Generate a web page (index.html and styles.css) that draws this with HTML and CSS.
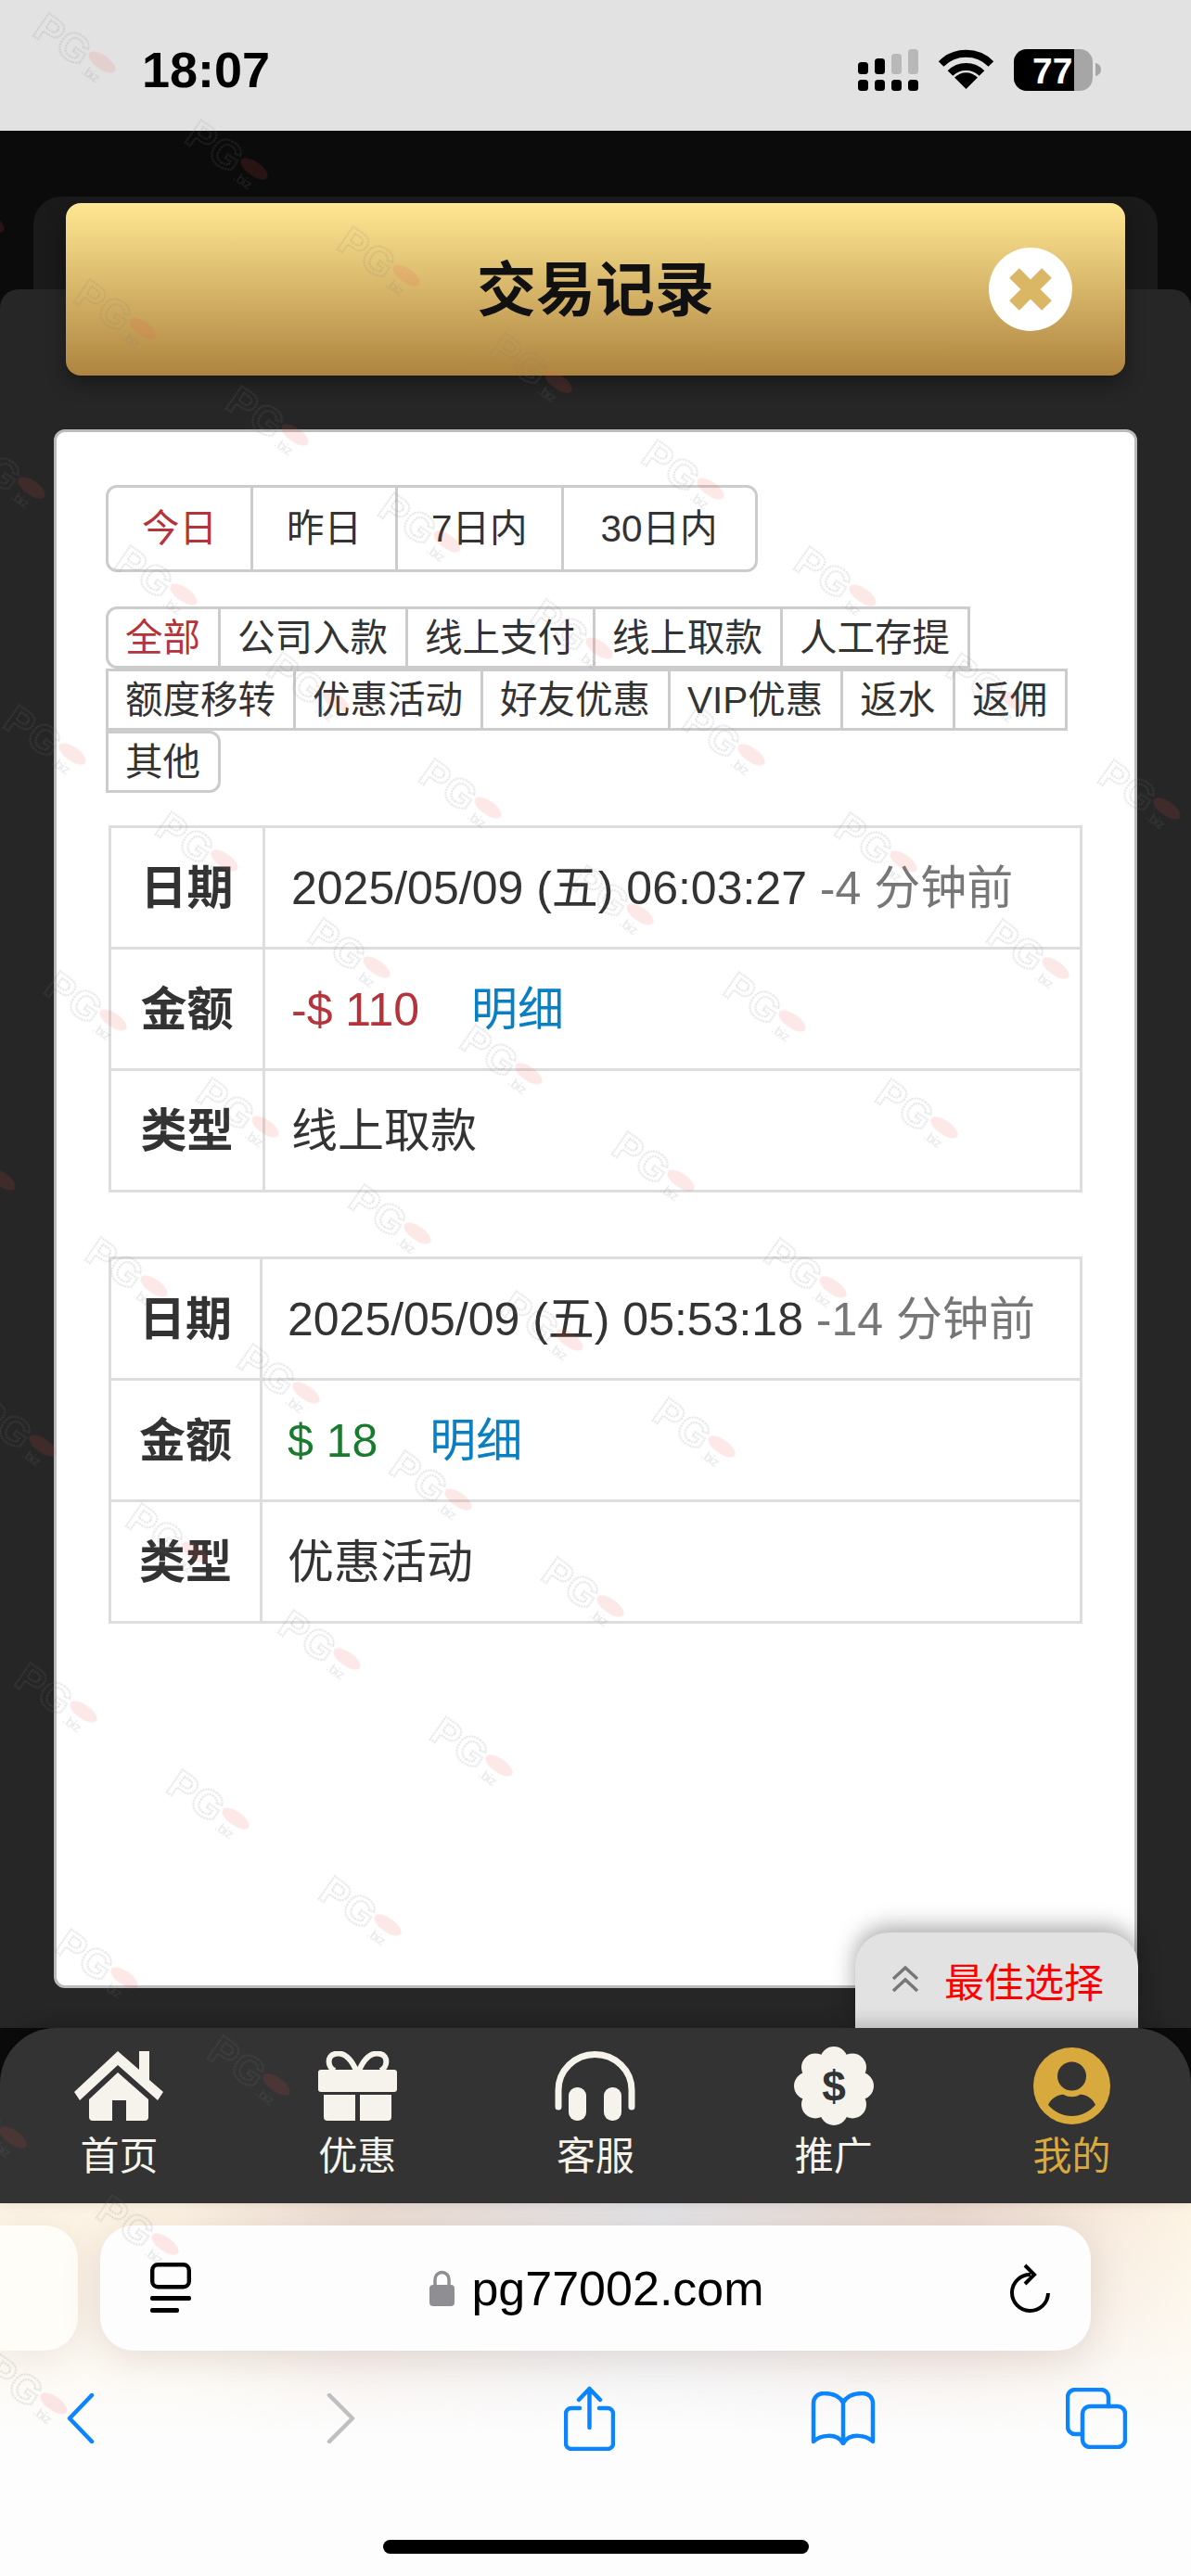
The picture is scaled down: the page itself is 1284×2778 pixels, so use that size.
FILE: index.html
```html
<!DOCTYPE html>
<html lang="zh-CN">
<head>
    <meta charset="UTF-8">
    <meta name="viewport" content="width=device-width, initial-scale=1.0">
    <title>交易记录</title>
    <link rel="stylesheet" href="styles.css">
</head>
<body>
    <!-- Status bar -->
    <header class="status-bar">
        <span class="status-time">18:07</span>
        <svg class="status-icons" width="262" height="51" viewBox="0 -3 262 51">
            <g fill="#000">
                <rect x="0" y="33" width="11" height="12" rx="3.5"/>
                <rect x="18" y="33" width="11" height="12" rx="3.5"/>
                <rect x="36" y="33" width="11" height="12" rx="3.5"/>
                <rect x="54" y="33" width="11" height="12" rx="3.5"/>
                <rect x="0" y="14" width="11" height="13" rx="3.5"/>
                <rect x="18" y="10" width="11" height="17" rx="3.5"/>
            </g>
            <g fill="#b8b8b8">
                <rect x="36" y="5" width="11" height="22" rx="3.5"/>
                <rect x="54" y="0" width="11" height="27" rx="3.5"/>
            </g>
            <g transform="translate(88 1)">
                <path d="M1.6 15A38 38 0 0 1 55.4 15M11.5 25A24 24 0 0 1 45.5 25" fill="none" stroke="#000" stroke-width="8"/>
                <path d="M28.5 42L16 29.5A17.7 17.7 0 0 1 41 29.5Z" fill="#000"/>
            </g>
            <rect x="168" y="0" width="85" height="45" rx="14" fill="#a6a6a6"/>
            <path d="M182 0H233V45H182A14 14 0 0 1 168 31V14A14 14 0 0 1 182 0Z" fill="#000"/>
            <path d="M256 15a7 7 0 0 1 6 7a7 7 0 0 1-6 7Z" fill="#a6a6a6"/>
            <text class="battery-text" x="188" y="37">77</text>
        </svg>
    </header>

    <div class="app">
        <div class="modal-back"></div>

        <!-- Title -->
        <div class="modal-title">
            <h1>交易记录</h1>
            <svg class="close-btn" width="90" height="90" viewBox="0 0 90 90">
                <circle cx="45" cy="45" r="45" fill="#fff"/>
                <path d="M27.5 27.5L62.5 62.5M62.5 27.5L27.5 62.5" stroke="#d9b765" stroke-width="15"/>
            </svg>
        </div>

        <main class="modal-body">
            <section class="card">
                <ul class="tabs">
                    <li class="active">今日</li>
                    <li>昨日</li>
                    <li>7日内</li>
                    <li>30日内</li>
                </ul>
                <ul class="filters">
                    <li class="active">全部</li>
                    <li>公司入款</li>
                    <li>线上支付</li>
                    <li>线上取款</li>
                    <li>人工存提</li>
                    <li>额度移转</li>
                    <li>优惠活动</li>
                    <li>好友优惠</li>
                    <li>VIP优惠</li>
                    <li>返水</li>
                    <li>返佣</li>
                    <li>其他</li>
                </ul>

                <!-- Records -->
                <table class="record">
                    <tr>
                        <th>日期</th>
                        <td>2025/05/09 (五) 06:03:27 <span class="ago">-4 分钟前</span></td>
                    </tr>
                    <tr>
                        <th>金额</th>
                        <td><span class="minus">-$ 110</span><a class="detail" href="#">明细</a></td>
                    </tr>
                    <tr>
                        <th>类型</th>
                        <td>线上取款</td>
                    </tr>
                </table>
                <table class="record record-narrow">
                    <tr>
                        <th>日期</th>
                        <td>2025/05/09 (五) 05:53:18 <span class="ago">-14 分钟前</span></td>
                    </tr>
                    <tr>
                        <th>金额</th>
                        <td><span class="plus">$ 18</span><a class="detail" href="#">明细</a></td>
                    </tr>
                    <tr>
                        <th>类型</th>
                        <td>优惠活动</td>
                    </tr>
                </table>
            </section>

            <div class="best-choice">
                <svg width="30" height="29" viewBox="0 0 30 29">
                    <path d="M2 14L15 2L28 14M2 27L15 15L28 27" fill="none" stroke="#777" stroke-width="3.5"/>
                </svg>
                <span>最佳选择</span>
            </div>
        </main>

        <!-- Bottom menu -->
        <nav class="bottom-nav">
            <a class="nav-item" href="#">
                <span class="nav-icon">
                    <svg width="96" height="75" viewBox="0 0 96 75" fill="#f5f3eb">
                        <path d="M47 0L70 20V0H81V31L96 44L90 53L47 15L6 53L0 44Z"/>
                        <path d="M47 23L80 52V71a4 4 0 0 1-4 4H56V53H41V75H20a4 4 0 0 1-4-4V52Z"/>
                    </svg>
                </span>
                首页
            </a>
            <a class="nav-item" href="#">
                <span class="nav-icon">
                    <svg width="85" height="75" viewBox="0 0 85 75" fill="#f5f3eb">
                        <path d="M41 21C35 7 27 1 18 3C9 5 10 18 18 21M44 21C50 7 58 1 67 3C76 5 75 18 67 21" fill="none" stroke="#f5f3eb" stroke-width="6"/>
                        <rect x="0" y="20" width="85" height="24" rx="3"/>
                        <path d="M6 47H40V75H10a4 4 0 0 1-4-4Z"/>
                        <path d="M45 47H79V71a4 4 0 0 1-4 4H45Z"/>
                    </svg>
                </span>
                优惠
            </a>
            <a class="nav-item" href="#">
                <span class="nav-icon">
                    <svg width="87" height="75" viewBox="0 0 87 75" fill="#f5f3eb">
                        <path d="M4 60V42A39.5 38.5 0 0 1 83 42V60" fill="none" stroke="#f5f3eb" stroke-width="7" stroke-linecap="round"/>
                        <rect x="15" y="39" width="19" height="36" rx="9"/>
                        <rect x="53" y="39" width="19" height="36" rx="9"/>
                    </svg>
                </span>
                客服
            </a>
            <a class="nav-item" href="#">
                <span class="nav-icon">
                    <svg width="86" height="85" viewBox="0 0 86 85" fill="#f5f3eb">
                        <circle cx="43" cy="42.5" r="30"/>
                        <circle cx="43" cy="15" r="15"/>
                        <circle cx="43" cy="70" r="15"/>
                        <circle cx="15" cy="42.5" r="15"/>
                        <circle cx="71" cy="42.5" r="15"/>
                        <circle cx="23" cy="22.5" r="15"/>
                        <circle cx="63" cy="22.5" r="15"/>
                        <circle cx="23" cy="62.5" r="15"/>
                        <circle cx="63" cy="62.5" r="15"/>
                        <text class="coin-text" x="43" y="59">$</text>
                    </svg>
                </span>
                推广
            </a>
            <a class="nav-item nav-active" href="#">
                <span class="nav-icon">
                    <svg width="83" height="83" viewBox="0 0 83 83">
                        <circle cx="41.5" cy="41.5" r="41.5" fill="#d8a93c"/>
                        <circle cx="41.5" cy="31" r="15.5" fill="#333"/>
                        <path d="M16 62C20 53 30 50 33 51C38 54 45 54 50 51C54 50 63 53 67 62C60 70 51 74 41.5 74C32 74 23 70 16 62Z" fill="#333"/>
                    </svg>
                </span>
                我的
            </a>
        </nav>
    </div>

    <!-- Safari bar -->
    <footer class="browser">
        <div class="address-row">
            <div class="tab-stub"></div>
            <div class="address-pill">
                <svg class="pill-left" width="44" height="55" viewBox="0 0 44 55">
                    <rect x="2.2" y="2.2" width="39.6" height="24" rx="6" fill="none" stroke="#000" stroke-width="4.4"/>
                    <rect x="0" y="36" width="44" height="5" rx="2"/>
                    <rect x="0" y="49" width="31" height="5" rx="2"/>
                </svg>
                <div class="url">
                    <svg width="27" height="39" viewBox="0 0 27 39">
                        <path d="M6 18V10a7.500 7.500 0 0 1 15 0V18" fill="none" stroke="#8e8e93" stroke-width="3.500"/>
                        <rect x="0" y="16" width="27" height="23" rx="4" fill="#8e8e93"/>
                    </svg>
                    <span>pg77002.com</span>
                </div>
                <svg class="pill-right" width="43" height="54" viewBox="0 0 43 54">
                    <path d="M22 12A19.500 19.500 0 1 0 41 32" fill="none" stroke="#000" stroke-width="4"/>
                    <path d="M16 2L26 12L16 22" fill="none" stroke="#000" stroke-width="4"/>
                </svg>
            </div>
        </div>
        <div class="toolbar">
            <svg width="30" height="54" viewBox="0 0 30 54">
                <path class="ios-line" d="M27 2L3 27L27 52"/>
            </svg>
            <svg width="31" height="54" viewBox="0 0 31 54">
                <path class="ios-line ios-off" d="M3 2L28 27L3 52"/>
            </svg>
            <svg width="55" height="70" viewBox="0 0 55 70">
                <path class="ios-line" d="M17 24H8a6 6 0 0 0-6 6V62a6 6 0 0 0 6 6H47a6 6 0 0 0 6-6V30a6 6 0 0 0-6-6H38M27.500 45V3M16 15L27.500 3L39 15"/>
            </svg>
            <svg width="70" height="58" viewBox="0 0 70 58">
                <path class="ios-line" d="M35 12C31 4 22 2 14 2C7 2 3 7 3 13V54C10 47 28 44 35 56C42 44 60 47 67 54V13C67 7 63 2 56 2C48 2 39 4 35 12ZM35 12V52"/>
            </svg>
            <svg width="66" height="66" viewBox="0 0 66 66">
                <rect class="ios-line" x="18" y="20" width="46" height="44" rx="8"/>
                <path class="ios-line" d="M18 50H10a8 8 0 0 1-8-8V10a8 8 0 0 1 8-8H38a8 8 0 0 1 8 8V20"/>
            </svg>
        </div>
        <div class="home-indicator"></div>
    </footer>

    <!-- Watermark over the whole screen -->
    <svg class="watermark" width="1284" height="2778">
        <defs>
            <pattern id="wm" patternUnits="userSpaceOnUse" width="1" height="1" patternTransform="matrix(164 115 -120 172 58 -94)">
                <g transform="matrix(.0040945 -.0027376 .0028566 .0039040 0 0)">
                    <g transform="translate(52 161) rotate(35)">
                        <text class="wm-logo" x="-16" y="22">PG</text>
                        <text class="wm-biz" x="-14" y="24">.biz</text>
                        <ellipse cx="0" cy="0" rx="17" ry="7.500" fill="#f05050" fill-opacity=".13"/>
                    </g>
                </g>
            </pattern>
        </defs>
        <polygon points="0,-112 1284,788 1284,889 0,2758" fill="url(#wm)"/>
    </svg>
</body>
</html>
```

FILE: styles.css
```css
/* Global */
* {
    box-sizing: border-box;
}
html, body {
    margin: 0;
    padding: 0;
}
body {
    position: relative;
    display: flex;
    flex-direction: column;
    width: 1284px;
    height: 2778px;
    overflow: hidden;
    background-color: #0b0b0b;
    color: #333;
    font-family: "Liberation Sans", "Noto Sans CJK SC", sans-serif;
}
ul {
    list-style: none;
    margin: 0;
    padding: 0;
}
a {
    text-decoration: none;
    color: inherit;
}

/* Status bar */
.status-bar {
    display: flex;
    justify-content: space-between;
    align-items: center;
    flex: 0 0 141px;
    padding: 9px 97px 0 153px;
    background-color: #e2e2e2;
}
.status-time {
    font-size: 54px;
    font-weight: bold;
    color: #000;
}
.battery-text {
    font-family: "Liberation Sans", sans-serif;
    font-size: 39px;
    font-weight: bold;
    fill: #fff;
}

/* Modal */
.app {
    position: relative;
    display: flex;
    flex-direction: column;
    flex: 1;
}
.modal-back {
    flex: 0 0 100px;
    margin: 71px 36px 0;
    border-radius: 30px 30px 0 0;
    background-color: #1a1a1a;
}
.modal-title {
    position: absolute;
    top: 78px;
    left: 71px;
    z-index: 2;
    display: flex;
    justify-content: center;
    align-items: center;
    width: 1142px;
    height: 186px;
    padding-bottom: 10px;
    border-radius: 16px;
    background: linear-gradient(to bottom, #ffe793, #ae843f);
    box-shadow: 0 9px 20px rgba(0, 0, 0, 0.35);
}
.modal-title h1 {
    margin: 0;
    font-size: 64px;
    font-weight: bold;
    color: #111;
}
.close-btn {
    position: absolute;
    top: 48px;
    right: 57px;
}
.modal-body {
    position: relative;
    display: flex;
    flex: 1;
    padding: 151px 58px 43px;
    border-radius: 20px 20px 0 0;
    background-color: #262626;
}

/* Card */
.card {
    flex: 1;
    padding: 57px 53px;
    border: 3px solid #bbb;
    border-radius: 12px;
    background-color: #fff;
}
.tabs, .filters {
    display: flex;
    font-size: 40.5px;
    color: #333;
}
.tabs {
    width: fit-content;
    height: 94px;
    border: 3px solid #ccc;
    border-radius: 12px;
}
.tabs li {
    display: flex;
    align-items: center;
    padding: 0 36px 8px;
    border-left: 3px solid #ccc;
}
.tabs li:first-child {
    border-left: 0;
}
.tabs li:last-child {
    padding: 0 40px 8px;
}
.filters {
    flex-wrap: wrap;
    margin: 37px 0 35px;
}
.filters li {
    display: flex;
    align-items: center;
    height: 67px;
    margin-right: -3px;
    padding: 0 19px 6px 18px;
    border: 3px solid #ccc;
}
.filters li:first-child {
    border-radius: 12px 0 0 12px;
}
.filters li:last-child {
    border-radius: 0 12px 12px 0;
}
.tabs .active, .filters .active {
    color: #b5333a;
}

/* Records */
.record {
    width: calc(100% - 6px);
    margin: 0 3px 69px;
    border-collapse: collapse;
    font-size: 50px;
}
.record th, .record td {
    height: 131px;
    padding-bottom: 9px;
    border: 3px solid #ddd;
}
.record th {
    width: 166px;
    font-weight: bold;
    text-align: center;
}
.record td {
    padding-left: 28px;
}
.record-narrow th {
    width: 163px;
}
.record-narrow td {
    padding-left: 27px;
}
.ago {
    color: #777;
}
.minus {
    color: #b5333a;
}
.plus {
    color: #1a7a2e;
}
.detail {
    margin-left: 56px;
    color: #0a7fc1;
}

/* Floating button */
.best-choice {
    position: absolute;
    right: 57px;
    bottom: 0;
    display: flex;
    align-items: center;
    gap: 27px;
    width: 305px;
    height: 103px;
    padding: 0 0 2px 39px;
    border-radius: 36px 36px 0 0;
    background-color: #e2e2e2;
    box-shadow: 0 -6px 24px rgba(0, 0, 0, 0.35);
    font-size: 43px;
    color: #f00;
}

/* Bottom menu */
.bottom-nav {
    position: relative;
    display: grid;
    grid-template-columns: repeat(5, 1fr);
    flex: 0 0 189px;
    border-radius: 60px 60px 0 0;
    background-color: #333;
    box-shadow: 0 -6px 18px rgba(0, 0, 0, 0.18);
}
.nav-item {
    display: flex;
    flex-direction: column;
    align-items: center;
    padding-top: 15px;
    font-size: 42px;
    line-height: 60px;
    color: #f5f3eb;
}
.nav-icon {
    display: flex;
    justify-content: center;
    align-items: center;
    height: 94px;
}
.nav-active {
    color: #d8a93c;
}
.coin-text {
    font-family: "Liberation Sans", sans-serif;
    font-size: 46px;
    font-weight: bold;
    text-anchor: middle;
    fill: #333;
}

/* Safari bar */
.browser {
    display: flex;
    flex-direction: column;
    flex: 0 0 402px;
    padding-top: 24px;
    background:
        linear-gradient(to bottom, rgba(253, 253, 253, 0) 0%, rgba(253, 253, 253, 0.6) 40%, #fdfdfd 62%),
        linear-gradient(to right, #fdf3e3 0%, #fdf3e3 15%, #ecdcd2 30%, #e2e2e6 55%, #ebd9cf 80%, #fdf3e2 100%);
}
.address-row {
    display: flex;
    gap: 24px;
}
.tab-stub {
    width: 84px;
    height: 135px;
    border-radius: 0 36px 36px 0;
    background-color: #fffdf7;
    box-shadow: 0 8px 40px rgba(120, 90, 70, 0.12);
}
.address-pill {
    display: grid;
    grid-template-columns: 1fr auto 1fr;
    align-items: center;
    width: 1068px;
    height: 135px;
    padding: 0 44px 0 54px;
    border-radius: 36px;
    background-color: #fefdfd;
    box-shadow: 0 8px 40px rgba(120, 90, 70, 0.18);
}
.pill-right {
    justify-self: end;
}
.url {
    display: flex;
    align-items: center;
    gap: 18px;
    margin-right: 7px;
    font-size: 52px;
    color: #000;
}
.toolbar {
    display: grid;
    grid-template-columns: 280px 256px 266px 275px 66px;
    align-items: center;
    height: 70px;
    margin-top: 38px;
    padding-left: 72px;
}
.ios-line {
    fill: none;
    stroke: #0a84ff;
    stroke-width: 4.5;
    stroke-linecap: round;
    stroke-linejoin: round;
}
.ios-off {
    stroke: #bfbfbf;
}
.home-indicator {
    width: 459px;
    height: 15px;
    margin: auto auto 24px;
    border-radius: 8px;
    background-color: #000;
}

/* Watermark */
.watermark {
    position: absolute;
    top: 0;
    left: 0;
    z-index: 5;
    pointer-events: none;
}
.wm-logo {
    font-family: "Liberation Sans", sans-serif;
    font-size: 44px;
    font-weight: bold;
    letter-spacing: 2px;
    text-anchor: end;
    fill: none;
    stroke: rgba(120, 120, 120, 0.2);
    stroke-width: 2;
    stroke-dasharray: 2 1;
}
.wm-biz {
    font-family: "Liberation Sans", sans-serif;
    font-size: 15px;
    fill: rgba(120, 120, 120, 0.2);
}
```
